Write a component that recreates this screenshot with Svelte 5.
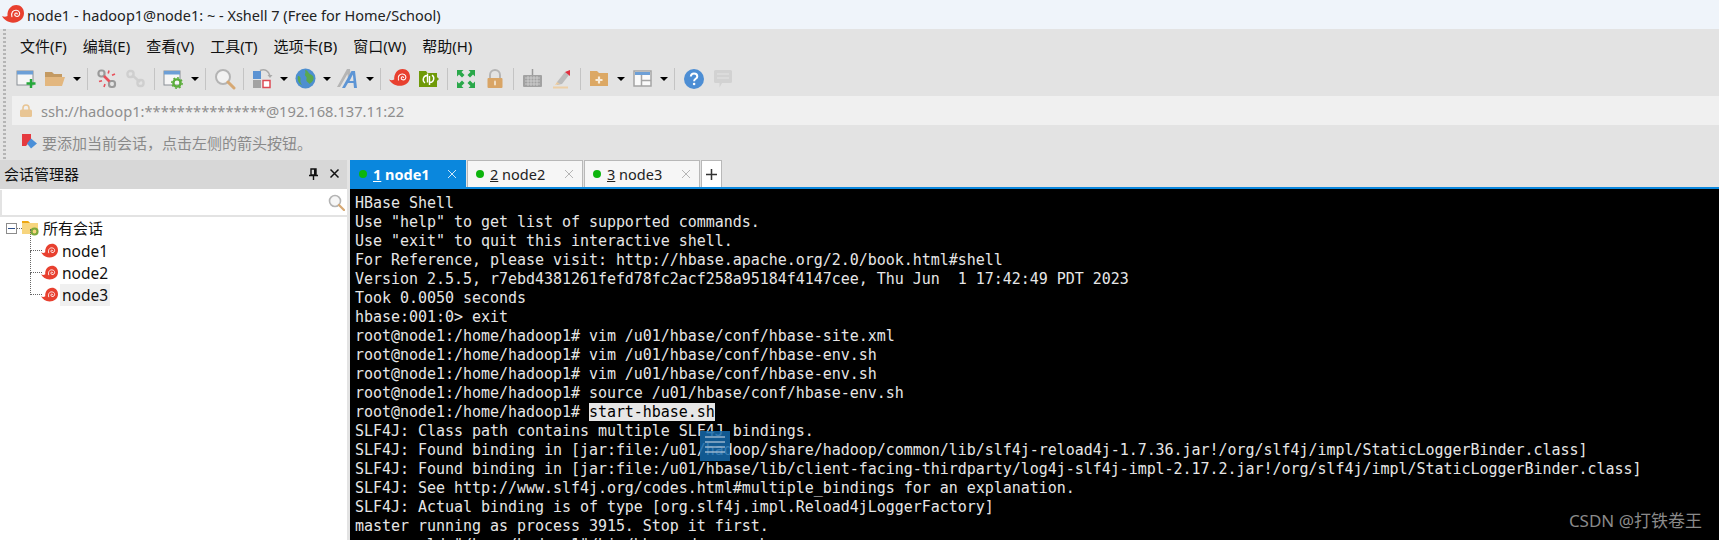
<script>
  const menus = ['文件(F)', '编辑(E)', '查看(V)', '工具(T)', '选项卡(B)', '窗口(W)', '帮助(H)'];

  const lines = [
    'HBase Shell',
    'Use "help" to get list of supported commands.',
    'Use "exit" to quit this interactive shell.',
    'For Reference, please visit: http://hbase.apache.org/2.0/book.html#shell',
    'Version 2.5.5, r7ebd4381261fefd78fc2acf258a95184f4147cee, Thu Jun  1 17:42:49 PDT 2023',
    'Took 0.0050 seconds',
    'hbase:001:0> exit',
    'root@node1:/home/hadoop1# vim /u01/hbase/conf/hbase-site.xml',
    'root@node1:/home/hadoop1# vim /u01/hbase/conf/hbase-env.sh',
    'root@node1:/home/hadoop1# vim /u01/hbase/conf/hbase-env.sh',
    'root@node1:/home/hadoop1# source /u01/hbase/conf/hbase-env.sh',
    'root@node1:/home/hadoop1# ',
    'SLF4J: Class path contains multiple SLF4J bindings.',
    'SLF4J: Found binding in [jar:file:/u01/hadoop/share/hadoop/common/lib/slf4j-reload4j-1.7.36.jar!/org/slf4j/impl/StaticLoggerBinder.class]',
    'SLF4J: Found binding in [jar:file:/u01/hbase/lib/client-facing-thirdparty/log4j-slf4j-impl-2.17.2.jar!/org/slf4j/impl/StaticLoggerBinder.class]',
    'SLF4J: See http://www.slf4j.org/codes.html#multiple_bindings for an explanation.',
    'SLF4J: Actual binding is of type [org.slf4j.impl.Reload4jLoggerFactory]',
    'master running as process 3915. Stop it first.',
    '        ld "/home/hadoop1"/bin/hbase-daemon.sh',
  ];

  const tabs = [
    { n: '1', name: 'node1', active: true },
    { n: '2', name: 'node2' },
    { n: '3', name: 'node3' },
  ];

  const nodes = ['node1', 'node2', 'node3'];
</script>

{#snippet snail(size)}
  <svg width={size} height={size} viewBox="0 0 20 20">
    <path fill="#e8402f" d="M0 11c2 1 3.500.8 5 0C4.500 5.500 8 1 13 1c4 0 7 3 7 7.500 0 5-4.500 8.500-10 8.500-4.500 0-8-2.500-10-6z" />
    <path fill="none" stroke="#fff" stroke-width="1" stroke-linecap="round" d="M9 11.500C8 8 10 5.500 13 5.700s3.800 3.300 2.400 4.800-4 .7-3.800-1 2-1.500 2.300-.4" />
  </svg>
{/snippet}

{#snippet caret()}
  <span class="cell caret"><i></i></span>
{/snippet}

{#snippet sep()}
  <span class="cell sep"><i></i></span>
{/snippet}

<div class="app">
  <header class="titlebar">
    {@render snail(22)}
    <span>node1 - hadoop1@node1: ~ - Xshell 7 (Free for Home/School)</span>
  </header>

  <div class="bars">
    <div class="grip"></div>
    <div class="bars-main">
      <nav class="menubar">
        {#each menus as m}
          <span>{m}</span>
        {/each}
      </nav>

      <div class="toolbar">
        <span class="cell">
          <svg width="20" height="20" viewBox="0 0 20 20">
            <rect x="1" y="2" width="16" height="14" fill="#f6f6f6" stroke="#8a8f96" />
            <rect x="1" y="2" width="16" height="3.500" fill="#6d9fd6" />
            <path d="M15 10v9M10.500 14.500h9" stroke="#25a83a" stroke-width="2.400" />
          </svg>
        </span>
        <span class="cell">
          <svg width="22" height="20" viewBox="0 0 22 20">
            <path d="M1 3h7l2 2h8v3H1z" fill="#c49a62" />
            <path d="M1 17V8h20l-3 9z" fill="#e3b77f" />
          </svg>
        </span>
        {@render caret()}
        {@render sep()}
        <span class="cell">
          <svg width="20" height="20" viewBox="0 0 20 20" fill="none">
            <rect x="1.500" y="1.500" width="6" height="6" rx="2.500" stroke="#9a9a9a" stroke-width="2.200" />
            <rect x="12" y="12" width="6" height="6" rx="2.500" stroke="#9a9a9a" stroke-width="2.200" />
            <path d="M7 7l5.500 5.500" stroke="#e8505b" stroke-width="2.600" />
            <path d="M12 1.500l-.8 3M18 5l-3 1.300M2 12.500l3-.8M7 18l1-3" stroke="#e8505b" stroke-width="1.600" />
          </svg>
        </span>
        <span class="cell">
          <svg width="20" height="20" viewBox="0 0 20 20" fill="none" stroke="#cfcfcf" stroke-width="2.400">
            <rect x="1.500" y="2" width="6" height="6" rx="2.500" />
            <rect x="11.500" y="11" width="6" height="6" rx="2.500" />
            <path d="M6 6l8 7" />
          </svg>
        </span>
        {@render sep()}
        <span class="cell">
          <svg width="20" height="20" viewBox="0 0 20 20">
            <rect x="1" y="2" width="16" height="14" fill="#f6f6f6" stroke="#8a8f96" />
            <rect x="1" y="2" width="16" height="3.500" fill="#6d9fd6" />
            <circle cx="14" cy="14" r="3.600" fill="none" stroke="#5cae3c" stroke-width="2.400" />
            <circle cx="14" cy="14" r="5.200" fill="none" stroke="#5cae3c" stroke-width="1.400" stroke-dasharray="2 2" />
          </svg>
        </span>
        {@render caret()}
        {@render sep()}
        <span class="cell">
          <svg width="22" height="22" viewBox="0 0 22 22">
            <circle cx="9" cy="9" r="7" fill="#f2f2f2" stroke="#b4b4b4" stroke-width="2" />
            <path d="M14 14l6 6" stroke="#d6a873" stroke-width="3" stroke-linecap="round" />
          </svg>
        </span>
        {@render sep()}
        <span class="cell">
          <svg width="21" height="21" viewBox="0 0 21 21">
            <rect x="1" y="3" width="8" height="8" fill="#5b93d3" />
            <rect x="1" y="12" width="8" height="8" fill="#a3a3a3" />
            <rect x="11" y="12.500" width="7" height="7" fill="#fff" stroke="#dd4b55" stroke-width="1.500" />
            <path d="M8 2.500c5-2 9 .5 10 5.500" fill="none" stroke="#aaa" stroke-width="1.600" />
            <path d="M15.500 7h5l-2.500 3z" fill="#aaa" />
          </svg>
        </span>
        {@render caret()}
        <span class="cell">
          <svg width="21" height="21" viewBox="0 0 21 21">
            <circle cx="10.500" cy="10.500" r="10" fill="#4d8fd0" />
            <path d="M10 2c3 0 3 3 5 4s4 2 3.500 5-2.500 3.500-4 5c-1-2-4-2.500-3-5s-2.500-3-1.500-5 0-3 0-4zM3 8c2-.5 3 2 2.500 4S6 15.500 7 17c-3-1-5-5-4-9z" fill="#5aa84f" />
          </svg>
        </span>
        {@render caret()}
        <span class="cell">
          <svg width="22" height="21" viewBox="0 0 22 21">
            <path d="M0 19L10 1h3l1 9-3 1-.5-5L3 19z" fill="#b5b5b5" />
            <path d="M5 20L14.500 3h3.500l2 17h-3l-.5-5h-5.500l-3 5zM12.500 13h4l-.6-6.500z" fill="#5d95d5" />
          </svg>
        </span>
        {@render caret()}
        {@render sep()}
        <span class="cell">{@render snail(21)}</span>
        <span class="cell">
          <svg width="20" height="18" viewBox="0 0 20 18">
            <path d="M0 1h7l1.500 2H18v4l2 2-2 2v6H0z" fill="#6f9a08" />
            <path d="M8 5.500a4 4 0 0 0-2 7.300M11 12.500a4 4 0 0 0 2-7.300M8.500 3.500v9M10.500 6v9" fill="none" stroke="#fff" stroke-width="1.400" />
          </svg>
        </span>
        {@render sep()}
        <span class="cell">
          <svg width="20" height="20" viewBox="0 0 20 20" fill="#2aa84a">
            <path d="M1 1h6.500L5.500 3l3 3L6 8.500l-3-3-2 2zM19 1v6.500l-2-2-3 3L11.500 6l3-3-2-2zM1 19v-6.500l2 2 3-3L8.500 14l-3 3 2 2zM19 19h-6.500l2-2-3-3 2.500-2.500 3 3 2-2z" />
          </svg>
        </span>
        <span class="cell">
          <svg width="18" height="20" viewBox="0 0 18 20">
            <path d="M4 9V6a5 5 0 0 1 10 0v3" fill="none" stroke="#b5b5b5" stroke-width="2" />
            <rect x="1.500" y="9" width="15" height="10" rx="1" fill="#d9a566" />
            <rect x="8" y="11.500" width="2" height="5" rx="1" fill="#f1dfc5" />
          </svg>
        </span>
        {@render sep()}
        <span class="cell">
          <svg width="21" height="19" viewBox="0 0 21 19">
            <path d="M10.500 0v6" stroke="#999" stroke-width="1.500" />
            <rect x="1" y="6" width="19" height="12" rx="1" fill="#a2a2a2" />
            <path d="M3 9h15M3 12h15M3 15h15M6 7v10M9 7v10M12 7v10M15 7v10" stroke="#d4d4d4" stroke-width=".8" />
          </svg>
        </span>
        <span class="cell">
          <svg width="20" height="20" viewBox="0 0 20 20">
            <path d="M5 13L13 3l4 3-7 9-5 1z" fill="#bcbcbc" />
            <path d="M13 3l5-2v6z" fill="#e0303f" />
            <path d="M5 13l3 2-5 1z" fill="#eccb9f" />
            <rect x="1" y="17.500" width="15" height="2" fill="#edcfa6" />
          </svg>
        </span>
        {@render sep()}
        <span class="cell">
          <svg width="20" height="17" viewBox="0 0 20 17">
            <path d="M1 1h7l2 2h9v13H1z" fill="#dca864" />
            <path d="M10 6.500v7M6.500 10h7" stroke="#f8ecd9" stroke-width="2.200" />
          </svg>
        </span>
        {@render caret()}
        <span class="cell">
          <svg width="19" height="17" viewBox="0 0 19 17">
            <rect x="1" y="1" width="17" height="15" fill="#fafafa" stroke="#a5a5a5" stroke-width="1.500" />
            <rect x="2" y="2" width="15" height="3" fill="#6d9fd6" />
            <path d="M8.500 5v11M8.500 10.500H18" stroke="#a5a5a5" stroke-width="1.500" />
          </svg>
        </span>
        {@render caret()}
        {@render sep()}
        <span class="cell">
          <svg width="20" height="20" viewBox="0 0 20 20">
            <circle cx="10" cy="10" r="10" fill="#4d8ed4" />
            <path d="M6.800 7.500C7 5.500 8.400 4.600 10 4.600c2 0 3.300 1.200 3.300 2.800 0 2.400-3.200 2.400-3.200 4.800" fill="none" stroke="#fff" stroke-width="2" />
            <circle cx="10.100" cy="15" r="1.300" fill="#fff" />
          </svg>
        </span>
        <span class="cell">
          <svg width="20" height="20" viewBox="0 0 20 20">
            <path d="M2.500 1h15A1.500 1.500 0 0 1 19 2.500v10a1.500 1.500 0 0 1-1.500 1.500H9l-2.500 4.500V14h-4A1.500 1.500 0 0 1 1 12.500v-10A1.500 1.500 0 0 1 2.500 1z" fill="#d2d2d2" />
            <path d="M4 5h12M4 9h12" stroke="#e4e4e4" stroke-width="1.200" />
          </svg>
        </span>
      </div>

      <div class="address">
        <svg width="12" height="13" viewBox="0 0 12 13">
          <path d="M3 6V4a3 3 0 0 1 6 0v2" fill="none" stroke="#e8c594" stroke-width="1.600" />
          <rect x="0" y="5.500" width="12" height="7.500" rx="1.500" fill="#e8c594" />
        </svg>
        <span>ssh://hadoop1:***************@192.168.137.11:22</span>
      </div>

      <div class="hint">
        <svg width="17" height="17" viewBox="0 0 17 17">
          <path d="M1 0h9v6L5 12H1z" fill="#e53a3f" />
          <path d="M10 4.500l6 5-6 5-4-5z" fill="#4a8fd8" />
        </svg>
        <span>要添加当前会话，点击左侧的箭头按钮。</span>
      </div>
    </div>
  </div>

  <main class="work">
    <aside class="sessions">
      <div class="panel-head">
        <span>会话管理器</span>
        <span class="panel-actions">
          <svg width="11" height="12" viewBox="0 0 11 12">
            <path d="M3 1h5v6H3zM1 7.500h9M5.500 8v4" fill="none" stroke="#111" stroke-width="1.400" />
            <path d="M6 1h2v6H6z" fill="#111" />
          </svg>
          <svg width="11" height="11" viewBox="0 0 11 11">
            <path d="M1.500 1.500l8 8M9.500 1.500l-8 8" stroke="#111" stroke-width="1.500" />
          </svg>
        </span>
      </div>
      <div class="search">
        <svg width="17" height="17" viewBox="0 0 17 17">
          <circle cx="7" cy="7" r="5.500" fill="#f6f6f6" stroke="#b4b4b4" stroke-width="1.600" />
          <path d="M11 11l5 5" stroke="#d6a873" stroke-width="2.200" stroke-linecap="round" />
        </svg>
      </div>
      <div class="tree">
        <div class="root">
          <span class="expander"></span>
          <span class="stub"></span>
          <svg width="17" height="16" viewBox="0 0 17 16">
            <path d="M0 1h6l2 2h8v11H0z" fill="#f7d57e" />
            <path d="M0 1h6l2 2H0z" fill="#eea711" />
            <circle cx="12.500" cy="11.500" r="3" fill="none" stroke="#7da83a" stroke-width="2.200" />
          </svg>
          <span class="label">所有会话</span>
        </div>
        <ul>
          {#each nodes as node}
            <li>
              {@render snail(17)}
              <span class="label" class:picked={node === 'node3'}>{node}</span>
            </li>
          {/each}
        </ul>
      </div>
    </aside>

    <section class="terminal-pane">
      <div class="tabs">
        {#each tabs as t}
          <div class="tab" class:active={t.active}>
            <span class="dot"></span>
            <span class="tab-name"><u>{t.n}</u> {t.name}</span>
            <svg width="10" height="10" viewBox="0 0 10 10">
              <path d="M1 1l8 8M9 1l-8 8" stroke={t.active ? '#cfe6f8' : '#b5b5b5'} />
            </svg>
          </div>
        {/each}
        <div class="tab add">
          <svg width="11" height="11" viewBox="0 0 11 11">
            <path d="M5.500 0v11M0 5.500h11" stroke="#333" stroke-width="1.500" />
          </svg>
        </div>
      </div>
      <div class="terminal">
        {#each lines as line, i}
          <div class="line">{line}{#if i === 11}<mark>start-hbase.sh</mark>{/if}</div>
        {/each}
      </div>
    </section>
  </main>

  <div class="float-note">
    <svg width="30" height="30" viewBox="0 0 30 30">
      <path d="M5 6h20M5 11h20M5 16h20M5 21h20" stroke="#9fb9d0" stroke-width="2" opacity=".7" />
    </svg>
  </div>
  <div class="watermark">CSDN @打铁卷王</div>
</div>

<style>
  :global(body) {
    margin: 0;
    background: #e3e3e3;
    overflow: hidden;
  }

  .app {
    position: relative;
    width: 1719px;
    height: 540px;
    overflow: hidden;
    display: flex;
    flex-direction: column;
    font-family: "Noto Sans", "Noto Sans CJK SC", sans-serif;
    font-size: 14px;
    color: #111;
  }

  .titlebar {
    height: 29px;
    flex: none;
    display: flex;
    align-items: center;
    gap: 3px;
    padding-left: 2px;
    background: #eff4fa;
    font-size: 14.5px;
    color: #222;
  }

  .bars {
    flex: none;
    display: flex;
    height: 131px;
  }

  .grip {
    width: 3px;
    margin: 0 9px 0 3px;
    background: repeating-linear-gradient(#b5b5b5 0 2px, transparent 2px 4px);
  }

  .bars-main {
    flex: 1;
    display: flex;
    flex-direction: column;
    margin-left: -3px;
  }

  .menubar {
    height: 32px;
    display: flex;
    align-items: center;
    gap: 16px;
    padding-left: 8px;
    font-size: 15px;
  }

  .toolbar {
    height: 35px;
    display: flex;
    align-items: center;
    margin-left: -0.5px;
  }

  .cell {
    width: 29px;
    height: 24px;
    flex: none;
    display: flex;
    align-items: center;
    justify-content: center;
  }

  .caret { width: 14px; }
  .caret i {
    border-left: 4px solid transparent;
    border-right: 4px solid transparent;
    border-top: 4px solid #000;
  }

  .sep { width: 8.5px; }
  .sep i {
    width: 1px;
    height: 22px;
    background: #c4c4c4;
  }

  .address {
    height: 29px;
    display: flex;
    align-items: center;
    gap: 9px;
    padding-left: 8px;
    background: #f0f0f0;
    color: #8e8e8e;
    font-size: 14.7px;
  }

  .hint {
    height: 35px;
    display: flex;
    align-items: center;
    gap: 4px;
    padding-left: 9px;
    color: #8a8a8a;
    font-size: 15px;
  }

  .work {
    flex: 1;
    min-height: 0;
    display: flex;
  }

  .sessions {
    width: 347px;
    flex: none;
    margin-right: 3px;
    background: #fff;
    display: flex;
    flex-direction: column;
  }

  .panel-head {
    height: 29px;
    flex: none;
    box-sizing: border-box;
    padding: 0 7px 2px 4px;
    display: flex;
    align-items: center;
    justify-content: space-between;
    background: #d7d7d7;
    font-size: 15px;
  }

  .panel-actions {
    display: flex;
    align-items: center;
    gap: 10px;
  }

  .search {
    height: 25px;
    flex: none;
    display: flex;
    align-items: center;
    justify-content: flex-end;
    padding: 0 2px 0 2px;
    margin-top: 1px;
    border-bottom: 2px solid #e3e3e3;
    border-left: 2px solid #e3e3e3;
  }

  .tree {
    padding-top: 1px;
    font-size: 15.5px;
  }

  .root {
    height: 20px;
    margin-bottom: 2px;
    display: flex;
    align-items: center;
    padding-left: 6px;
  }

  .expander {
    position: relative;
    width: 9px;
    height: 9px;
    border: 1px solid #8c8c8c;
  }
  .expander::after {
    content: "";
    position: absolute;
    left: 1px;
    right: 1px;
    top: 4px;
    height: 1px;
    background: #2d4f8a;
  }

  .stub {
    width: 5px;
    border-top: 1px dotted #666;
  }

  .root .label { margin-left: 2px; font-size: 15px; }

  ul {
    list-style: none;
    margin: 0;
    padding: 0 0 0 41px;
  }

  li {
    position: relative;
    height: 22px;
    display: flex;
    align-items: center;
    gap: 2px;
  }
  li::before {
    content: "";
    position: absolute;
    left: -11px;
    top: -11px;
    width: 11px;
    height: 21px;
    border-left: 1px dotted #666;
    border-bottom: 1px dotted #666;
  }
  li:first-child::before {
    top: -11px;
    height: 21px;
  }

  .label { padding: 0 2px; line-height: 22px; }
  .picked { background: #f0f0f0; }

  .terminal-pane {
    flex: 1;
    min-width: 0;
    display: flex;
    flex-direction: column;
  }

  .tabs {
    height: 27px;
    flex: none;
    display: flex;
    gap: 1px;
    border-bottom: 2px solid #0a87dd;
  }

  .tab {
    width: 116px;
    box-sizing: border-box;
    display: flex;
    align-items: center;
    gap: 6px;
    padding: 0 8px 0 8px;
    background: #f6f6f6;
    border: 1px solid #b8b8b8;
    border-bottom: 0;
    font-size: 14.5px;
    color: #222;
  }

  .tab svg { margin-left: auto; }

  .tab.active {
    background: #0a87dd;
    border-color: #0a87dd;
    color: #fff;
    font-weight: 700;
  }

  .tab.add {
    width: 21px;
    padding: 0;
    justify-content: center;
    background: #fff;
  }
  .tab.add svg { margin: 0; }

  .dot {
    width: 8px;
    height: 8px;
    border-radius: 50%;
    background: #0db50d;
  }

  .terminal {
    flex: 1;
    min-height: 0;
    overflow: hidden;
    padding: 5px 0 0 5px;
    background: #000;
    color: #e6e6e6;
    font-family: "DejaVu Sans Mono", monospace;
    font-size: 15px;
    letter-spacing: -0.035px;
    line-height: 19px;
  }

  .line { white-space: pre; height: 19px; }

  mark {
    background: #e6e6e6;
    color: #000;
  }

  .float-note {
    position: absolute;
    left: 700px;
    top: 431px;
    width: 30px;
    height: 30px;
    background: rgba(20, 105, 170, 0.85);
  }

  .watermark {
    position: absolute;
    right: 17px;
    top: 510px;
    color: #8a8a8a;
    font-size: 17px;
    line-height: 22px;
  }
</style>
